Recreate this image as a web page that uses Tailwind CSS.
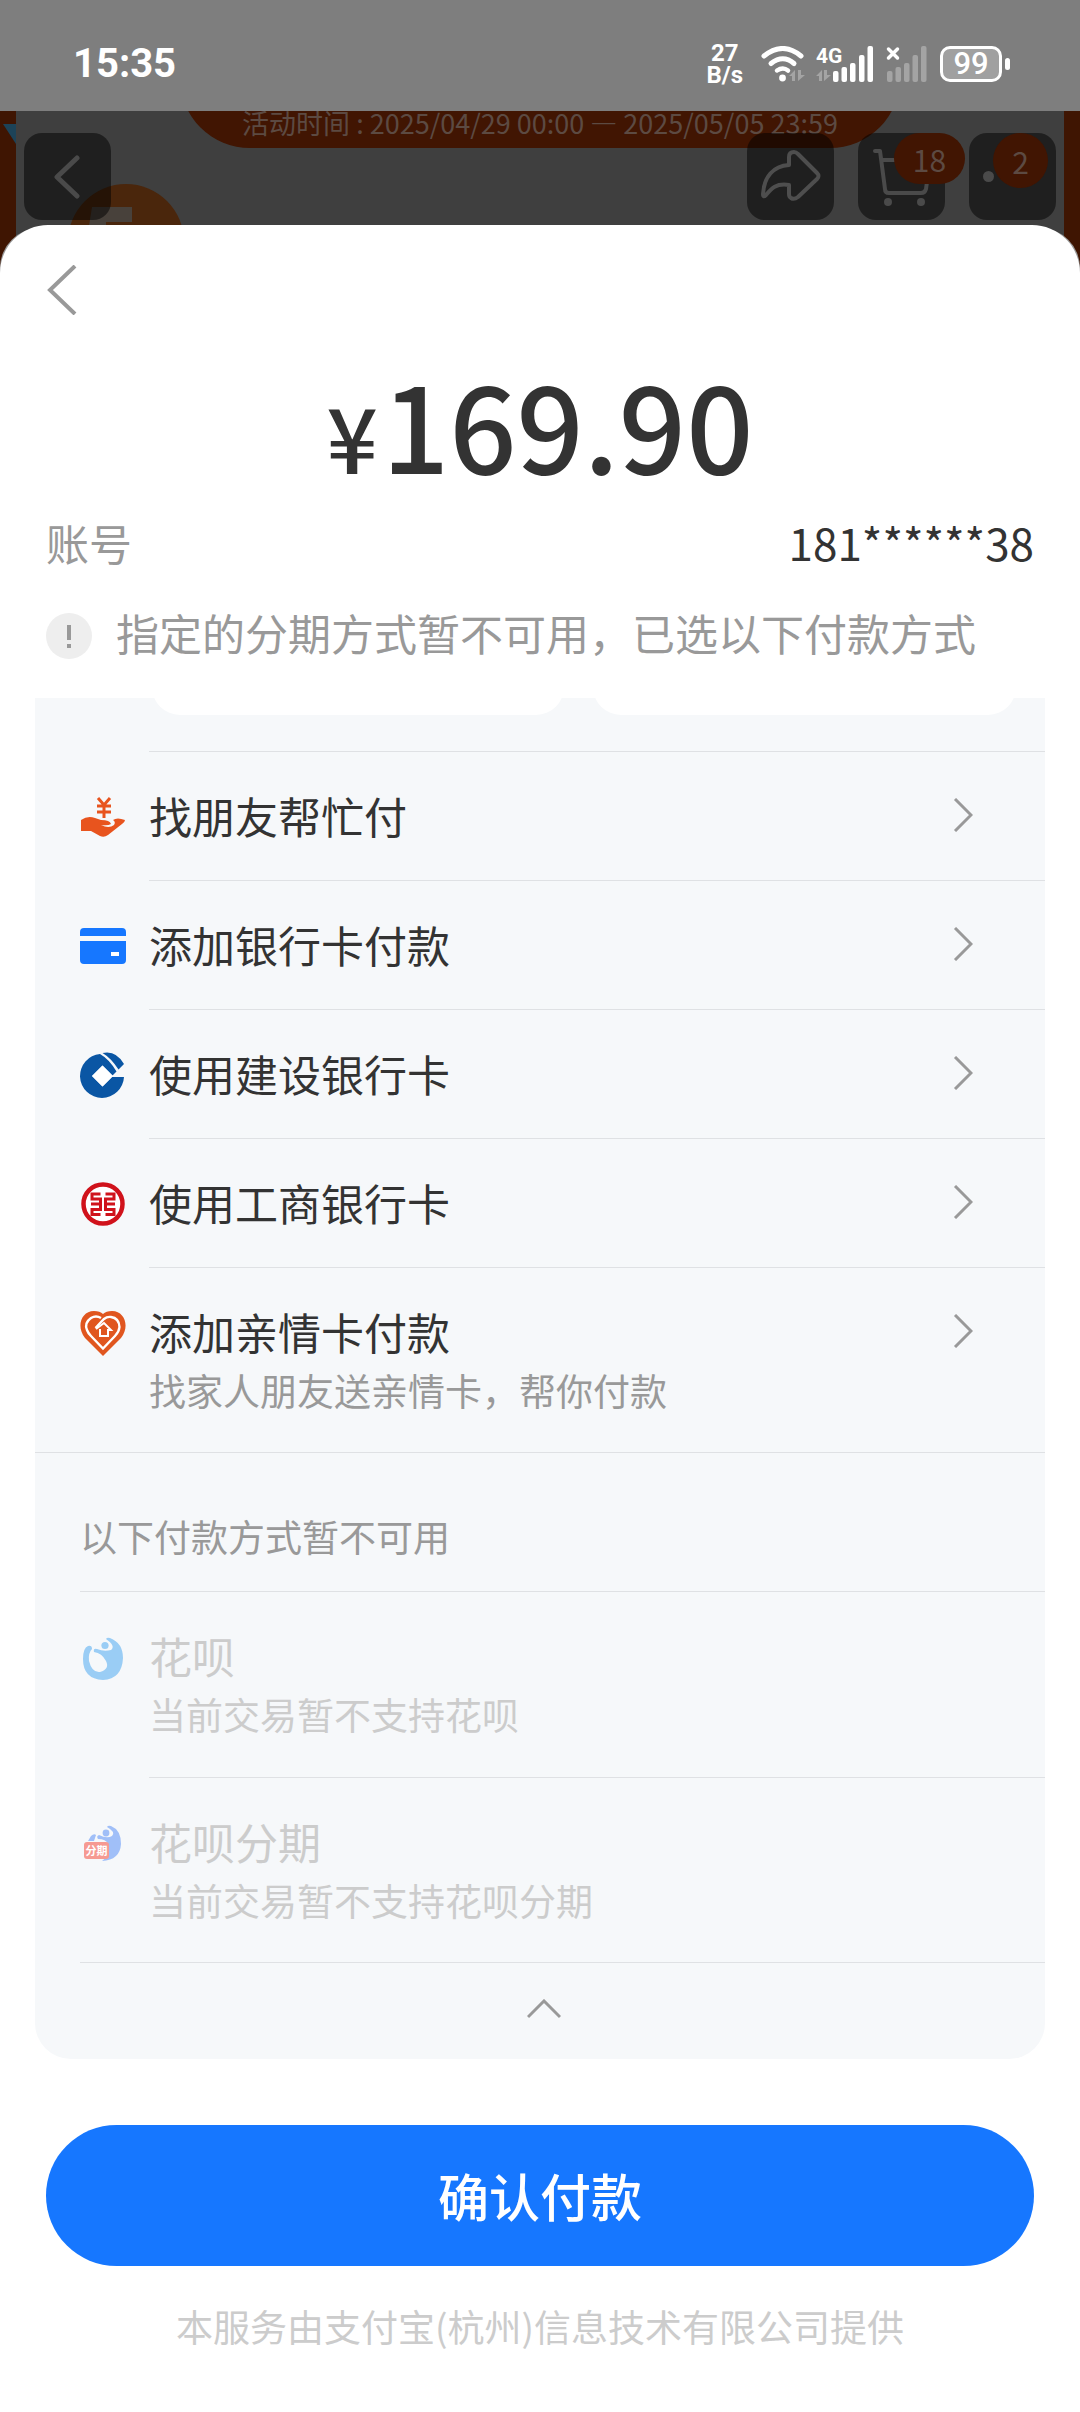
<!DOCTYPE html>
<html lang="zh-CN">
<head>
<meta charset="utf-8">
<meta name="viewport" content="width=device-width, initial-scale=1">
<title>确认付款</title>
<script src="https://cdn.jsdelivr.net/npm/@tailwindcss/browser@4"></script>
</head>
<body class="min-h-screen flex flex-col bg-white font-['Noto_Sans_CJK_SC',sans-serif] text-[#333]">

<!-- System status bar -->
<div class="flex h-[111px] items-center justify-between bg-[#7e7e7e] pt-4 pr-[70px] pl-[73px] font-['Roboto','Noto_Sans_CJK_SC',sans-serif] text-white">
  <span class="text-[40px] leading-none font-bold">15:35</span>
  <div class="flex items-center">
    <div class="mr-[18px] text-center text-[24px] leading-[22px] font-bold"><p>27</p><p>B/s</p></div>
    <svg class="mr-[9px] h-9 w-[46px]" viewBox="0 0 46 36" fill="none" stroke="#fff" stroke-width="5" stroke-linecap="round">
      <path d="M3 10Q22-5 40 10"/><path d="M10 17.500Q22 8 33 17.500"/><path d="M16 24.500Q22 20.500 27 24.500" stroke-width="4.500"/>
      <circle cx="21.500" cy="32" r="3.400" fill="#fff" stroke="none"/>
      <path d="M28 30l6-6v11h-3v-5zM37 24v11l7-6h-4v-5z" fill="#a4a4a4" stroke="none"/>
    </svg>
    <svg class="mr-3 h-9 w-[58px]" viewBox="0 0 58 36" fill="#fff">
      <text x="0" y="17" font-size="21" font-weight="700">4G</text>
      <path d="M0 30l6-6v11H3v-5zM8 24v11l7-6h-4v-5z" fill="#a4a4a4"/>
      <rect x="17" y="25" width="5.500" height="11" rx="2"/><rect x="25.500" y="21" width="5.500" height="15" rx="2"/><rect x="34" y="17" width="5.500" height="19" rx="2"/><rect x="43" y="9" width="5.500" height="27" rx="2"/><rect x="51.500" y="0" width="5.500" height="36" rx="2"/>
    </svg>
    <svg class="mr-3 h-9 w-[42px]" viewBox="0 0 42 36" fill="#a4a4a4">
      <path d="M2.500 3l9 9M11.500 3l-9 9" stroke="#fff" stroke-width="3.500" stroke-linecap="round"/>
      <rect x="1" y="25" width="5.500" height="11" rx="2"/><rect x="9.500" y="21" width="5.500" height="15" rx="2"/><rect x="18" y="17" width="5.500" height="19" rx="2"/><rect x="26.500" y="9" width="5.500" height="27" rx="2"/><rect x="35" y="0" width="5.500" height="36" rx="2"/>
    </svg>
    <span class="flex h-9 w-[62px] items-center justify-center rounded-[10px] border-[3px] border-white bg-[#a0a0a0] text-[31px] leading-none font-medium">99</span>
    <span class="ml-[3px] h-3 w-[5px] rounded-full bg-white"></span>
  </div>
</div>

<!-- Dimmed shop page behind the sheet -->
<header class="relative flex h-[162px] items-start justify-between overflow-hidden border-x-[16px] border-[#3f1502] bg-[#3f3f3f] px-2 pt-[22px] text-[#5c4a42]">
  <div class="absolute inset-x-[164px] -top-[103px] h-[140px] rounded-full bg-[#411502]"></div>
  <p class="absolute inset-x-0 top-0 text-center text-[27px] leading-6 whitespace-nowrap">活动时间 : 2025/04/29 00:00 — 2025/05/05 23:59</p>
  <svg class="absolute top-[73px] left-[52px] h-[116px] w-[116px]" viewBox="0 0 116 116"><circle cx="58" cy="58" r="58" fill="#4a260c"/><path d="M24 23h40v15H38v10H20z" fill="#48413b"/></svg>
  <button aria-label="返回" class="relative flex h-[87px] w-[87px] items-center justify-center rounded-[18px] bg-black/50">
    <svg class="h-11 w-8" viewBox="0 0 32 44" fill="none" stroke="#4a4a4a" stroke-width="5" stroke-linecap="round" stroke-linejoin="round"><path d="M25 3L5 22l20 19"/></svg>
  </button>
  <div class="relative flex gap-6">
    <button aria-label="分享" class="flex h-[87px] w-[87px] items-center justify-center rounded-[18px] bg-black/50">
      <svg class="h-14 w-[60px]" viewBox="0 0 60 56" fill="none" stroke="#4e4e4e" stroke-width="4" stroke-linejoin="round"><path d="M28 16V8q0-5 5-5q2 0 4 2l19 19q3 3 0 6L37 48q-4 3-7 1q-2-1-2-4V36C14 34 10 40 5 46q-3 3-3-1C3 28 12 17 28 16z"/></svg>
    </button>
    <button aria-label="购物车" class="relative flex h-[87px] w-[87px] items-center justify-center rounded-[18px] bg-black/50">
      <svg class="h-[60px] w-[60px]" viewBox="0 0 60 60" fill="none" stroke="#4a4a4a" stroke-width="4" stroke-linecap="round" stroke-linejoin="round"><path d="M3 4h5l5 38q0 4 4 4h32q4 0 5-4l4-29H11"/><circle cx="16" cy="55" r="4" fill="#4a4a4a" stroke="none"/><circle cx="49" cy="55" r="4" fill="#4a4a4a" stroke="none"/></svg>
      <span class="absolute top-0 -right-5 flex h-[51px] w-[71px] items-center justify-center rounded-full bg-[#411502] text-[30px] leading-none">18</span>
    </button>
    <button aria-label="更多" class="relative flex h-[87px] w-[87px] items-center rounded-[18px] bg-black/50 pl-[14px]">
      <span class="h-[11px] w-[11px] rounded-full bg-[#4a4a4a]"></span>
      <span class="absolute top-0 right-2 flex h-[55px] w-[55px] items-center justify-center rounded-full bg-[#411502] text-[30px] leading-none">2</span>
    </button>
  </div>
  <!-- Corner of a blue sticker on the orange frame -->
  <svg class="fixed top-[111px] left-0 h-10 w-4" viewBox="0 0 16 40"><path d="M3 13h13v20z" fill="#1d4358"/></svg>
</header>

<!-- Payment sheet, stacked over an earlier one whose corners show -->
<div class="relative -mt-[45px] flex flex-1 flex-col rounded-t-[40px] bg-[#999]">
<main class="-mt-[3px] flex flex-1 flex-col rounded-t-[48px] bg-white">
  <button aria-label="返回" class="mt-10 ml-[46px] h-[50px] w-8 self-start">
    <svg class="h-[50px] w-8" viewBox="0 0 32 50" fill="none" stroke="#999" stroke-width="4"><path d="M29 1L4 25l25 24"/></svg>
  </button>

  <h1 class="mt-10 flex items-baseline justify-center gap-1 font-medium">
    <span class="text-[90px] leading-[136px]">¥</span><span class="text-[118px] leading-[136px]">169.90</span>
  </h1>

  <dl class="mt-2 flex items-center justify-between px-[46px] text-[43px] leading-[62px]">
    <dt class="text-[#999]">账号</dt>
    <dd class="text-[44px]">181******38</dd>
  </dl>

  <p class="mt-7 flex items-center gap-6 px-[46px] text-[43px] leading-[62px] text-[#999]">
    <svg class="mt-2 h-[46px] w-[46px] shrink-0" viewBox="0 0 46 46"><circle cx="23" cy="23" r="23" fill="#eee"/><path d="M23 12v15M23 31v4" stroke="#999" stroke-width="4"/></svg>
    指定的分期方式暂不可用，已选以下付款方式
  </p>

  <section class="mx-[35px] mt-[35px] rounded-b-[36px] bg-[#f6f8fa]">
    <!-- Lower edge of the scrolled-away option cards -->
    <div class="ml-[114px] h-[54px] overflow-hidden border-b border-[#dfe1e4] pr-[29px] pl-[3px]">
      <div class="-mt-10 grid grid-cols-[41fr_42fr] gap-[29px]">
        <div class="h-[57px] rounded-[28px] bg-white"></div>
        <div class="h-[57px] rounded-[28px] bg-white"></div>
      </div>
    </div>

    <ul>
      <li><button class="flex w-full gap-[23px] pl-[45px] text-left">
        <svg class="mt-[42px] h-[46px] w-[46px] shrink-0" viewBox="0 0 46 46"><path d="M1 26Q8 21 15 24L21 26Q30 26 31 30Q28 32 21 31Q29 35 34 31Q36 28 33 26Q37 23 45 26Q45 28 42 30L28 41Q24 44 20 42L11 37H1Z" fill="#e8541e"/><path d="M18 4l6 7 6-7M24 11v13M17 12h14M17 18h14" fill="none" stroke="#e8541e" stroke-width="3"/></svg>
        <span class="flex h-[129px] flex-1 border-b border-[#dfe1e4] pr-[72px]">
          <span class="mt-[33px] flex-1 text-[43px] leading-[60px]">找朋友帮忙付</span>
          <svg class="mt-[46px] h-[34px] w-5" viewBox="0 0 20 34" fill="none" stroke="#999" stroke-width="3"><path d="M2 1l16 16L2 33"/></svg>
        </span>
      </button></li>
      <li><button class="flex w-full gap-[23px] pl-[45px] text-left">
        <svg class="mt-[42px] h-[46px] w-[46px] shrink-0" viewBox="0 0 46 46"><path d="M0 13V9q0-4 4-4h38q4 0 4 4v4zM0 18h46v19q0 4-4 4H4q-4 0-4-4z" fill="#1677ff"/><path d="M31 29h8v4h-8z" fill="#fff"/></svg>
        <span class="flex h-[129px] flex-1 border-b border-[#dfe1e4] pr-[72px]">
          <span class="mt-[33px] flex-1 text-[43px] leading-[60px]">添加银行卡付款</span>
          <svg class="mt-[46px] h-[34px] w-5" viewBox="0 0 20 34" fill="none" stroke="#999" stroke-width="3"><path d="M2 1l16 16L2 33"/></svg>
        </span>
      </button></li>
      <li><button class="flex w-full gap-[23px] pl-[45px] text-left">
        <svg class="mt-[42px] h-[46px] w-[46px] shrink-0" viewBox="0 0 46 46"><path d="M20 2A22 22 0 1 0 44 25H32L22.500 34.500 12 24 22.500 13.500 32.500 23.500 36.500 19.500Q29 7 20 2Z" fill="#0a56a4"/><path d="M22.500 1Q36-2 44 12L38.500 17.500Q31 6 22.500 1Z" fill="#0a56a4"/><path d="M22.500 13.500L33 24 22.500 34.500 12 24Z" fill="#fff"/></svg>
        <span class="flex h-[129px] flex-1 border-b border-[#dfe1e4] pr-[72px]">
          <span class="mt-[33px] flex-1 text-[43px] leading-[60px]">使用建设银行卡</span>
          <svg class="mt-[46px] h-[34px] w-5" viewBox="0 0 20 34" fill="none" stroke="#999" stroke-width="3"><path d="M2 1l16 16L2 33"/></svg>
        </span>
      </button></li>
      <li><button class="flex w-full gap-[23px] pl-[45px] text-left">
        <svg class="mt-[42px] h-[46px] w-[46px] shrink-0" viewBox="0 0 46 46" fill="none" stroke="#d0121b"><circle cx="23" cy="23" r="19.500" stroke-width="4.500" fill="#fff"/><path d="M20.500 13H12v5h8.500v5H11M20.500 23v5.500H12V33.500h8.500M25.500 13H34v5h-8.500v5H35M25.500 23v5.500H34V33.500h-8.500" stroke-width="3"/></svg>
        <span class="flex h-[129px] flex-1 border-b border-[#dfe1e4] pr-[72px]">
          <span class="mt-[33px] flex-1 text-[43px] leading-[60px]">使用工商银行卡</span>
          <svg class="mt-[46px] h-[34px] w-5" viewBox="0 0 20 34" fill="none" stroke="#999" stroke-width="3"><path d="M2 1l16 16L2 33"/></svg>
        </span>
      </button></li>
      <li class="border-b border-[#dfe1e4]"><button class="flex w-full gap-[23px] pl-[45px] text-left">
        <svg class="mt-[42px] h-[46px] w-[46px] shrink-0" viewBox="0 0 46 46"><path d="M23 46L5 28C-4 17 1 1 14 1q6 0 9 3q3-3 9-3C45 1 50 17 41 28z" fill="#e0561f"/><path d="M21 8Q16 5 11 8Q4 13 7 20Q8 23 11 26L23 38.500 35 26Q39 22 39.500 17Q39 8 31 7Q27 6.500 24 9L15.500 18" fill="none" stroke="#fff" stroke-width="2.400"/><path d="M16 19l8-6 7 7h-3v6h-8v-7" fill="none" stroke="#fff" stroke-width="2"/></svg>
        <span class="flex h-[184px] flex-1 pr-[72px]">
          <span class="mt-[33px] flex-1 text-[43px] leading-[60px]">添加亲情卡付款<span class="block text-[37px] leading-[58px] text-[#999]">找家人朋友送亲情卡，帮你付款</span></span>
          <svg class="mt-[46px] h-[34px] w-5" viewBox="0 0 20 34" fill="none" stroke="#999" stroke-width="3"><path d="M2 1l16 16L2 33"/></svg>
        </span>
      </button></li>
    </ul>

    <h2 class="ml-[45px] h-[139px] border-b border-[#dfe1e4] pt-[55px] text-[37px] leading-[56px] text-[#999]">以下付款方式暂不可用</h2>
    <ul class="text-[#ccc]">
      <li><button disabled class="flex w-full gap-[23px] pl-[45px] text-left">
        <svg class="mt-[42px] h-[46px] w-[46px] shrink-0" viewBox="0 0 46 46"><path d="M26 5Q27 3 30 4Q43 9 43 24Q42 45 23 46Q3 45 3 25Q3 14 8 12q4-1 4 3Q8 19 9 27Q12 39 20 38Q30 35 26 27Q22 19 14 18Q13 14 17 15Q24 18 31 16Q36 12 26 5Z" fill="#9acdf5"/><circle cx="25" cy="11.500" r="3.600" fill="#9acdf5"/></svg>
        <span class="h-[186px] flex-1 border-b border-[#dfe1e4] pt-[33px] text-[43px] leading-[60px]">花呗<span class="block text-[37px] leading-[58px]">当前交易暂不支持花呗</span></span>
      </button></li>
      <li><button disabled class="flex w-full gap-[23px] pl-[45px] text-left">
        <svg class="mt-[42px] h-[46px] w-[46px] shrink-0" viewBox="0 0 46 46"><path d="M27 7Q28 5 31 6Q41 10 41 24Q40 40 22 41L28 36V24Q26 19 18 19Q16 16 19 15Q27 19 32 16Q36 12 27 7Z" fill="#a0bff8"/><circle cx="26" cy="13" r="3.400" fill="#a0bff8"/><path d="M11 16q3-3 5-1l-2 6H8z" fill="#a0bff8"/><rect x="4" y="22" width="25" height="17" rx="3" fill="#f69a92"/><text x="5.500" y="35" font-size="11" font-weight="700" fill="#fff">分期</text></svg>
        <span class="h-[184px] flex-1 pt-[33px] text-[43px] leading-[60px]">花呗分期<span class="block text-[37px] leading-[58px]">当前交易暂不支持花呗分期</span></span>
      </button></li>
    </ul>
    <button aria-label="收起" class="ml-[45px] flex h-[97px] w-[calc(100%-45px)] justify-center border-t border-[#dfe1e4] pt-[36px] pr-[37px]">
      <svg class="h-5 w-[34px]" viewBox="0 0 34 20" fill="none" stroke="#999" stroke-width="3"><path d="M1 18L17 2l16 16"/></svg>
    </button>
  </section>

  <button class="mx-[46px] mt-[66px] h-[141px] rounded-full bg-[#1677ff] text-[51px] leading-none font-medium text-white">确认付款</button>
  <footer class="mt-8 pb-[53px] text-center text-[37px] leading-[56px] text-[#ccc]">本服务由支付宝(杭州)信息技术有限公司提供</footer>
</main>
</div>
</body>
</html>
